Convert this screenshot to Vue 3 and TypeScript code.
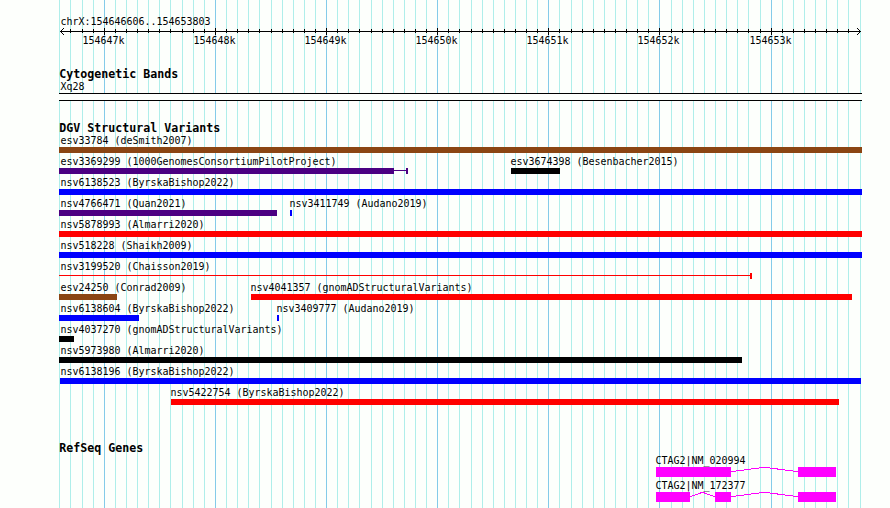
<template>
  <div class="browser">
    <svg class="tracks" :width="width" :height="height" :viewBox="`0 0 ${width} ${height}`">
      <g shape-rendering="crispEdges">
        <rect
          v-for="line in gridLines"
          :key="line.x"
          :class="line.major ? 'grid-major' : 'grid-minor'"
          :x="line.x"
          y="0"
          width="1"
          :height="height"
        />
      </g>

      <!-- ruler -->
      <text class="label" x="60.5" y="25" :textLength="labelWidth(region)" lengthAdjust="spacingAndGlyphs">{{ region }}</text>
      <g shape-rendering="crispEdges">
        <rect x="60" y="31" width="801" height="1" />
        <rect
          v-for="line in gridLines.slice(1, -1)"
          :key="line.x"
          :x="line.x"
          :y="line.major ? 28 : 29"
          width="1"
          :height="line.major ? 7 : 4"
        />
      </g>
      <path class="arrow" d="M64 28L60.5 31.5L64 35M857 28L860.5 31.5L857 35" />
      <text
        v-for="line in majorLines"
        :key="line.name"
        class="label"
        :x="line.x - 21.5"
        y="44"
        :textLength="labelWidth(line.name)"
        lengthAdjust="spacingAndGlyphs"
      >{{ line.name }}</text>

      <text
        v-for="heading in headings"
        :key="heading.name"
        class="heading"
        x="59.3"
        :y="heading.y"
        :textLength="heading.name.length * 7"
        lengthAdjust="spacingAndGlyphs"
      >{{ heading.name }}</text>

      <!-- cytogenetic band -->
      <text class="label" x="60.5" y="90" textLength="24" lengthAdjust="spacingAndGlyphs">Xq28</text>
      <g shape-rendering="crispEdges">
        <rect class="band" x="59" y="93" width="803" height="8" />
        <rect x="59" y="93" width="803" height="1" />
        <rect x="59" y="100" width="803" height="1" />
      </g>

      <!-- structural variants -->
      <g v-for="variant in variants" :key="variant.name" :class="variant.color">
        <g shape-rendering="crispEdges">
          <rect :x="variant.start" :y="rowTop(variant.row)" :width="variant.end - variant.start" height="6" />
          <template v-if="variant.tail">
            <rect
              :x="variant.end"
              :y="rowTop(variant.row) + 2"
              :width="variant.tail - variant.end"
              height="1"
            />
            <rect :x="variant.tail" :y="rowTop(variant.row)" width="2" height="6" />
          </template>
        </g>
        <text
          class="label"
          :x="(variant.labelX ?? 60) + 0.5"
          :y="rowTop(variant.row) - 3"
          :textLength="labelWidth(variant.name)"
          lengthAdjust="spacingAndGlyphs"
        >{{ variant.name }}</text>
      </g>

      <!-- genes -->
      <g v-for="gene in genes" :key="gene.name">
        <rect
          v-for="exon in gene.exons"
          :key="exon[0]"
          class="exon"
          shape-rendering="crispEdges"
          :x="exon[0]"
          :y="gene.y"
          :width="exon[1] - exon[0]"
          height="10"
        />
        <path class="intron" shape-rendering="crispEdges" :d="intronPath(gene)" />
        <text
          class="label"
          x="655.5"
          :y="gene.y - 3"
          :textLength="labelWidth(gene.name)"
          lengthAdjust="spacingAndGlyphs"
        >{{ gene.name }}</text>
      </g>
    </svg>
  </div>
</template>

<script setup lang="ts">
import { computed } from 'vue'

interface Variant {
  name: string
  row: number
  start: number
  end: number
  color: 'brown' | 'indigo' | 'blue' | 'red' | 'black'
  labelX?: number
  tail?: number
}

interface Gene {
  name: string
  y: number
  exons: [number, number][]
}

const width = 890
const height = 508
const region = 'chrX:154646606..154653803'

// one line per 100 bp, a major one per 1 kb
const gridLines = computed(() =>
  [...Array(73).keys()].map((i) => ({
    x: Math.floor(59.84 + i * 11.114),
    major: i % 10 === 4,
    name: `${154647 + (i - 4) / 10}k`,
  })),
)
const majorLines = computed(() => gridLines.value.filter((line) => line.major))

const headings = [
  { name: 'Cytogenetic Bands', y: 78 },
  { name: 'DGV Structural Variants', y: 132 },
  { name: 'RefSeq Genes', y: 452 },
]

const variants: Variant[] = [
  { name: 'esv33784 (deSmith2007)', row: 0, start: 59, end: 862, color: 'brown' },
  { name: 'esv3369299 (1000GenomesConsortiumPilotProject)', row: 1, start: 59, end: 394, tail: 406, color: 'indigo' },
  { name: 'esv3674398 (Besenbacher2015)', row: 1, start: 511, end: 560, labelX: 510, color: 'black' },
  { name: 'nsv6138523 (ByrskaBishop2022)', row: 2, start: 59, end: 862, color: 'blue' },
  { name: 'nsv4766471 (Quan2021)', row: 3, start: 59, end: 277, color: 'indigo' },
  { name: 'nsv3411749 (Audano2019)', row: 3, start: 290, end: 292, labelX: 289, color: 'blue' },
  { name: 'nsv5878993 (Almarri2020)', row: 4, start: 59, end: 862, color: 'red' },
  { name: 'nsv518228 (Shaikh2009)', row: 5, start: 59, end: 862, color: 'blue' },
  { name: 'nsv3199520 (Chaisson2019)', row: 6, start: 59, end: 59, tail: 750, color: 'red' },
  { name: 'esv24250 (Conrad2009)', row: 7, start: 59, end: 117, color: 'brown' },
  { name: 'nsv4041357 (gnomADStructuralVariants)', row: 7, start: 251, end: 852, labelX: 250, color: 'red' },
  { name: 'nsv6138604 (ByrskaBishop2022)', row: 8, start: 59, end: 139, color: 'blue' },
  { name: 'nsv3409777 (Audano2019)', row: 8, start: 277, end: 279, labelX: 276, color: 'blue' },
  { name: 'nsv4037270 (gnomADStructuralVariants)', row: 9, start: 59, end: 74, color: 'black' },
  { name: 'nsv5973980 (Almarri2020)', row: 10, start: 59, end: 742, color: 'black' },
  { name: 'nsv6138196 (ByrskaBishop2022)', row: 11, start: 60, end: 861, color: 'blue' },
  { name: 'nsv5422754 (ByrskaBishop2022)', row: 12, start: 171, end: 839, labelX: 170, color: 'red' },
]

const genes: Gene[] = [
  { name: 'CTAG2|NM_020994', y: 467, exons: [[656, 731], [798, 836]] },
  { name: 'CTAG2|NM_172377', y: 492, exons: [[656, 690], [715, 731], [798, 836]] },
]

function labelWidth(text: string): number {
  return text.length * 6
}

function rowTop(row: number): number {
  return 147 + row * 21
}

// introns are drawn as a shallow hat between neighbouring exons
function intronPath(gene: Gene): string {
  return gene.exons
    .slice(1)
    .map((exon, i) => {
      const from = gene.exons[i][1]
      const mid = (from + exon[0]) / 2
      return `M${from} ${gene.y + 4.7}L${mid} ${gene.y + 0.3}L${exon[0]} ${gene.y + 4.7}`
    })
    .join('')
}
</script>

<style>
body {
  margin: 0;
  background: #fdfffc;
}
</style>

<style scoped>
.browser {
  width: 890px;
  height: 508px;
  overflow: hidden;
}

.tracks {
  display: block;
}

.grid-minor {
  fill: #afeeea;
}

.grid-major {
  fill: #84cbe9;
}

.label {
  font: 11px 'DejaVu Sans Mono', monospace;
  fill: #000;
}

.heading {
  font: bold 11.4px 'DejaVu Sans Mono', monospace;
  fill: #000;
}

.arrow {
  fill: none;
  stroke: #000;
}

.band {
  fill: #fdfffc;
}

.brown {
  fill: #8b4513;
}

.indigo {
  fill: #4b0082;
}

.blue {
  fill: #00f;
}

.red {
  fill: #f00;
}

.black {
  fill: #000;
}

.exon {
  fill: #f0f;
}

.intron {
  fill: none;
  stroke: #f0f;
}
</style>
